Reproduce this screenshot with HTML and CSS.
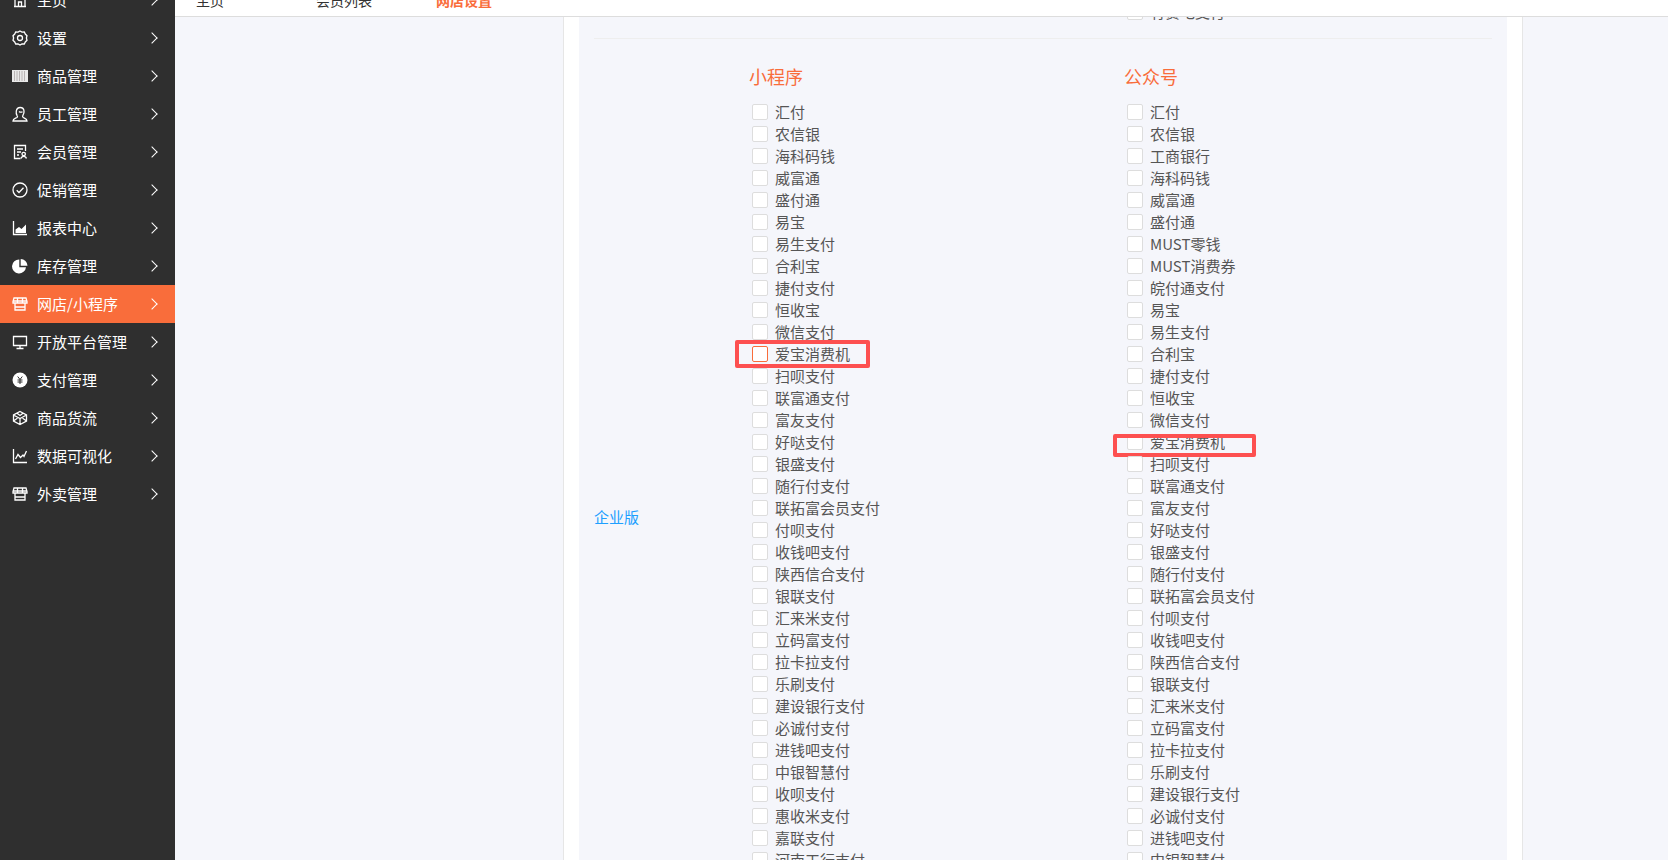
FILE: index.html
```html
<!DOCTYPE html>
<html lang="zh-CN">

<head>
  <meta charset="UTF-8">
  <title>网店设置</title>
  <link rel="stylesheet" href="styles.css">
</head>

<body>
  <div class="app">
    <aside class="sidebar">
      <ul class="nav">
        <li class="nav-item">
          <svg class="nav-icon" viewBox="0 0 16 16"><path d="M2 14.500h12M3 14.500V7h10v7.500M1.500 7 8 2l6.500 5M6.500 14.500V10h3v4.500"/></svg>
          <span class="nav-text">主页</span><i class="chevron"></i>
        </li>
        <li class="nav-item">
          <svg class="nav-icon" viewBox="0 0 16 16"><path d="M8 1l2 1.100 2.300-.1 1 2 1.700 1.700L14.400 8l.6 2.300-1.700 1.700-1 2-2.300-.1L8 15l-2-1.100-2.300.1-1-2L1 10.300 1.600 8 1 5.700 2.700 4l1-2 2.300.1z"/><circle cx="8" cy="8" r="2.500"/></svg>
          <span class="nav-text">设置</span><i class="chevron"></i>
        </li>
        <li class="nav-item">
          <svg class="nav-icon" viewBox="0 0 16 16"><path class="solid-soft" d="M0 2h16v12H0z"/><path class="barcode" d="M2.500 3v10M5 3v10M7.500 3v10M10 3v10M12.500 3v10"/></svg>
          <span class="nav-text">商品管理</span><i class="chevron"></i>
        </li>
        <li class="nav-item">
          <svg class="nav-icon" viewBox="0 0 16 16"><path d="M1 15c0-2.500 2.500-2.500 4-3.500.8-.6.500-1.500 0-2.200C4.200 8 4 6.800 4.300 5 4.700 2.800 6.300 1.500 8.200 1.500c2 0 3.600 1.400 3.800 3.500.2 1.800-.2 3-1 4.200-.5.800-.7 1.700.2 2.300 1.300.9 3.800 1 3.800 3.500z"/><path d="M7 5.500c1 .8 2.500.8 3.500.2"/></svg>
          <span class="nav-text">员工管理</span><i class="chevron"></i>
        </li>
        <li class="nav-item">
          <svg class="nav-icon" viewBox="0 0 16 16"><path d="M13.500 7V1.500h-11v13h6M5 5h6M5 8h4M5 11h2"/><circle cx="11.700" cy="10" r="1.700"/><path d="M9 14.500c.3-1.500 1.300-2.200 2.700-2.200s2.400.7 2.700 2.200"/></svg>
          <span class="nav-text">会员管理</span><i class="chevron"></i>
        </li>
        <li class="nav-item">
          <svg class="nav-icon" viewBox="0 0 16 16"><circle cx="8" cy="8" r="7"/><path d="M4.700 8.200 7 10.500l4.500-4.700"/></svg>
          <span class="nav-text">促销管理</span><i class="chevron"></i>
        </li>
        <li class="nav-item">
          <svg class="nav-icon" viewBox="0 0 16 16"><path d="M1.500 1v13.500H15"/><path class="solid" d="M3.500 13V9.500L7 7l2.500 2L14 4.500V13z"/></svg>
          <span class="nav-text">报表中心</span><i class="chevron"></i>
        </li>
        <li class="nav-item">
          <svg class="nav-icon" viewBox="0 0 16 16"><path class="solid" d="M7.300 1.500A7 7 0 1 0 14 9.200H7.300z"/><path class="solid" d="M8.700 1v6.800H15.500A7 7 0 0 0 8.700 1z"/></svg>
          <span class="nav-text">库存管理</span><i class="chevron"></i>
        </li>
        <li class="nav-item nav-item-active">
          <svg class="nav-icon" viewBox="0 0 16 16"><path d="M2 2h12l1 3.500v1.500H1V5.500zM3 7v7h10V7M1.500 5h13M5.500 2v5M10.500 2v5M3 11h10"/></svg>
          <span class="nav-text">网店/小程序</span><i class="chevron"></i>
        </li>
        <li class="nav-item">
          <svg class="nav-icon" viewBox="0 0 16 16"><path d="M1.500 2.500h13v9h-13zM8 11.500v3M4.500 14.500h7"/></svg>
          <span class="nav-text">开放平台管理</span><i class="chevron"></i>
        </li>
        <li class="nav-item">
          <svg class="nav-icon" viewBox="0 0 16 16"><circle class="solid" cx="8" cy="8" r="7.500"/><path class="yen" d="M5.700 4.500 8 7.500l2.300-3M5.500 8h5M5.500 10h5M8 7.500V12"/></svg>
          <span class="nav-text">支付管理</span><i class="chevron"></i>
        </li>
        <li class="nav-item">
          <svg class="nav-icon" viewBox="0 0 16 16"><path d="M8 1.500 14.500 5v6L8 14.500 1.500 11V5zM1.500 5 8 8.500 14.500 5M8 8.500v6M5 3.200 8 5.500l3-2.300M1.500 11 5 8.500V6.500M14.500 11 11 8.500V6.500"/></svg>
          <span class="nav-text">商品货流</span><i class="chevron"></i>
        </li>
        <li class="nav-item">
          <svg class="nav-icon" viewBox="0 0 16 16"><path d="M1.500 1v13.500H15M3.500 11 6 6.500l2.500 3 2.500-2.500 1 1.500L14.500 3"/></svg>
          <span class="nav-text">数据可视化</span><i class="chevron"></i>
        </li>
        <li class="nav-item">
          <svg class="nav-icon" viewBox="0 0 16 16"><path d="M2 2h12l1 3.500v1.500H1V5.500zM3 7v7h10V7M1.500 5h13M5.500 2v5M10.500 2v5M3 11h10"/></svg>
          <span class="nav-text">外卖管理</span><i class="chevron"></i>
        </li>
      </ul>
    </aside>

    <div class="main">
      <div class="topbar">
        <div class="tabs">
          <a class="tab">主页</a>
          <a class="tab">会员列表</a>
          <a class="tab tab-active">网店设置</a>
        </div>
      </div>

      <div class="content">
        <div class="panel">
          <div class="panel-inner">
            <div class="prev-row">
              <label class="pay-item"><span class="check"></span>有赞电支付</label>
            </div>

            <div class="pay-row">
              <div class="pay-label">企业版</div>

              <div class="pay-col">
                <h3 class="pay-title">小程序</h3>
                <label class="pay-item"><span class="check"></span>汇付</label>
                <label class="pay-item"><span class="check"></span>农信银</label>
                <label class="pay-item"><span class="check"></span>海科码钱</label>
                <label class="pay-item"><span class="check"></span>威富通</label>
                <label class="pay-item"><span class="check"></span>盛付通</label>
                <label class="pay-item"><span class="check"></span>易宝</label>
                <label class="pay-item"><span class="check"></span>易生支付</label>
                <label class="pay-item"><span class="check"></span>合利宝</label>
                <label class="pay-item"><span class="check"></span>捷付支付</label>
                <label class="pay-item"><span class="check"></span>恒收宝</label>
                <label class="pay-item"><span class="check"></span>微信支付</label>
                <label class="pay-item"><span class="check check-hover"></span>爱宝消费机<i class="mark mark-one"></i></label>
                <label class="pay-item"><span class="check"></span>扫呗支付</label>
                <label class="pay-item"><span class="check"></span>联富通支付</label>
                <label class="pay-item"><span class="check"></span>富友支付</label>
                <label class="pay-item"><span class="check"></span>好哒支付</label>
                <label class="pay-item"><span class="check"></span>银盛支付</label>
                <label class="pay-item"><span class="check"></span>随行付支付</label>
                <label class="pay-item"><span class="check"></span>联拓富会员支付</label>
                <label class="pay-item"><span class="check"></span>付呗支付</label>
                <label class="pay-item"><span class="check"></span>收钱吧支付</label>
                <label class="pay-item"><span class="check"></span>陕西信合支付</label>
                <label class="pay-item"><span class="check"></span>银联支付</label>
                <label class="pay-item"><span class="check"></span>汇来米支付</label>
                <label class="pay-item"><span class="check"></span>立码富支付</label>
                <label class="pay-item"><span class="check"></span>拉卡拉支付</label>
                <label class="pay-item"><span class="check"></span>乐刷支付</label>
                <label class="pay-item"><span class="check"></span>建设银行支付</label>
                <label class="pay-item"><span class="check"></span>必诚付支付</label>
                <label class="pay-item"><span class="check"></span>进钱吧支付</label>
                <label class="pay-item"><span class="check"></span>中银智慧付</label>
                <label class="pay-item"><span class="check"></span>收呗支付</label>
                <label class="pay-item"><span class="check"></span>惠收米支付</label>
                <label class="pay-item"><span class="check"></span>嘉联支付</label>
                <label class="pay-item"><span class="check"></span>河南工行支付</label>
              </div>

              <div class="pay-col">
                <h3 class="pay-title">公众号</h3>
                <label class="pay-item"><span class="check"></span>汇付</label>
                <label class="pay-item"><span class="check"></span>农信银</label>
                <label class="pay-item"><span class="check"></span>工商银行</label>
                <label class="pay-item"><span class="check"></span>海科码钱</label>
                <label class="pay-item"><span class="check"></span>威富通</label>
                <label class="pay-item"><span class="check"></span>盛付通</label>
                <label class="pay-item"><span class="check"></span>MUST零钱</label>
                <label class="pay-item"><span class="check"></span>MUST消费券</label>
                <label class="pay-item"><span class="check"></span>皖付通支付</label>
                <label class="pay-item"><span class="check"></span>易宝</label>
                <label class="pay-item"><span class="check"></span>易生支付</label>
                <label class="pay-item"><span class="check"></span>合利宝</label>
                <label class="pay-item"><span class="check"></span>捷付支付</label>
                <label class="pay-item"><span class="check"></span>恒收宝</label>
                <label class="pay-item"><span class="check"></span>微信支付</label>
                <label class="pay-item"><span class="check"></span>爱宝消费机<i class="mark mark-two"></i></label>
                <label class="pay-item"><span class="check"></span>扫呗支付</label>
                <label class="pay-item"><span class="check"></span>联富通支付</label>
                <label class="pay-item"><span class="check"></span>富友支付</label>
                <label class="pay-item"><span class="check"></span>好哒支付</label>
                <label class="pay-item"><span class="check"></span>银盛支付</label>
                <label class="pay-item"><span class="check"></span>随行付支付</label>
                <label class="pay-item"><span class="check"></span>联拓富会员支付</label>
                <label class="pay-item"><span class="check"></span>付呗支付</label>
                <label class="pay-item"><span class="check"></span>收钱吧支付</label>
                <label class="pay-item"><span class="check"></span>陕西信合支付</label>
                <label class="pay-item"><span class="check"></span>银联支付</label>
                <label class="pay-item"><span class="check"></span>汇来米支付</label>
                <label class="pay-item"><span class="check"></span>立码富支付</label>
                <label class="pay-item"><span class="check"></span>拉卡拉支付</label>
                <label class="pay-item"><span class="check"></span>乐刷支付</label>
                <label class="pay-item"><span class="check"></span>建设银行支付</label>
                <label class="pay-item"><span class="check"></span>必诚付支付</label>
                <label class="pay-item"><span class="check"></span>进钱吧支付</label>
                <label class="pay-item"><span class="check"></span>中银智慧付</label>
              </div>
            </div>
          </div>
        </div>
      </div>
    </div>
  </div>
</body>

</html>
```

FILE: styles.css
```css
html,
body {
  margin: 0;
  padding: 0;
  height: 100%;
  overflow: hidden;
  background-color: #f5f6fb;
  font-family: "Noto Sans CJK SC", "Liberation Sans", sans-serif;
  font-size: 15px;
  color: #555;
}

.app {
  display: flex;
  height: 860px;
  overflow: hidden;
}

/* sidebar */
.sidebar {
  flex: none;
  width: 175px;
  background-color: #2f2f2f;
  overflow: hidden;
}

.nav {
  list-style: none;
  margin: -19px 0 0;
  padding: 0;
}

.nav-item {
  display: flex;
  align-items: center;
  height: 38px;
  padding-left: 12px;
  color: #fff;
  font-size: 15px;
}

.nav-item-active {
  background-color: #f96d3b;
}

.nav-icon {
  flex: none;
  width: 16px;
  height: 16px;
  margin-right: 9px;
  fill: none;
  stroke: #fff;
  stroke-width: 1.3;
}

.nav-icon .solid {
  fill: #fff;
  stroke: none;
}

.nav-icon .yen {
  stroke: #2f2f2f;
  stroke-width: 1;
}

.nav-icon .solid-soft {
  fill: #e9e9e9;
  stroke: none;
}

.nav-icon .barcode {
  stroke: #b9b4b4;
  stroke-width: 1;
}

.nav-text {
  flex: 1;
  line-height: 38px;
}

.chevron {
  flex: none;
  width: 7px;
  height: 7px;
  margin-right: 19px;
  border-top: 1.5px solid #fff;
  border-right: 1.5px solid #fff;
  transform: rotate(45deg);
}

/* main */
.main {
  flex: 1;
  min-width: 0;
  display: flex;
  flex-direction: column;
  overflow: hidden;
}

.topbar {
  flex: none;
  position: relative;
  z-index: 2;
  height: 16px;
  background-color: #fff;
  border-bottom: 1px solid #ddd;
  overflow: hidden;
}

.tabs {
  display: flex;
  margin-top: -10px;
  padding-left: 21px;
  font-size: 14px;
  line-height: 20px;
}

.tab {
  width: 120px;
  color: #333;
}

.tab-active {
  color: #f96d3b;
  font-weight: bold;
}

.content {
  flex: 1;
  padding: 0 145px 0 388px;
}

.panel {
  height: 100%;
  padding: 0 15px;
  background-color: #fff;
  border-left: 1px solid #e6e6e6;
  border-right: 1px solid #e6e6e6;
}

.panel-inner {
  height: 100%;
  padding: 0 15px;
  background-color: #f5f6fb;
}

.prev-row {
  margin-top: -16px;
  padding: 0 0 15px 530px;
  border-bottom: 1px solid #eee;
}

.pay-row {
  display: flex;
  height: 954px;
}

.pay-label {
  flex: none;
  align-self: center;
  width: 155px;
  color: #1e9fff;
}

.pay-col {
  flex: none;
  width: 375px;
}

.pay-title {
  margin: 25px 0 13px;
  font-size: 18px;
  font-weight: normal;
  line-height: 24px;
  color: #f96d3b;
}

.pay-item {
  position: relative;
  box-sizing: border-box;
  display: flex;
  align-items: center;
  height: 22px;
  margin-left: 3px;
  padding-bottom: 2px;
  white-space: nowrap;
}

.check {
  flex: none;
  box-sizing: border-box;
  width: 16px;
  height: 16px;
  margin-top: 2px;
  margin-right: 7px;
  background-color: #fff;
  border: 1px solid #ddd;
  border-radius: 2px;
}

.check-hover {
  border-color: #f96d3b;
}

/* red marks somebody drew on top of the screenshot */
.mark {
  position: absolute;
  box-sizing: border-box;
  border: 4px solid #fd5050;
  border-radius: 2px;
}

.mark-one {
  left: -17px;
  top: -3px;
  width: 135px;
  height: 28px;
}

.mark-two {
  left: -14px;
  top: 3px;
  width: 143px;
  height: 23px;
}
```
